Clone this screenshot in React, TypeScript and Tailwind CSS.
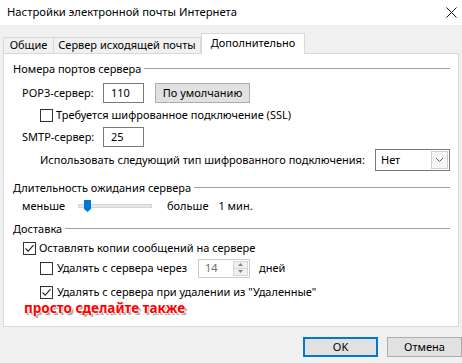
import React from 'react'

const font = "font-['Noto_Sans','Liberation_Sans',sans-serif]"

function Check({ checked }: { checked?: boolean }) {
  return (
    <span className="flex h-[13px] w-[13px] shrink-0 items-center justify-center border border-[#333] bg-white">
      {checked && (
        <svg width="11" height="11" viewBox="0 0 11 11">
          <path d="M1.5 5.5 L4.2 8.2 L9.5 2.2" fill="none" stroke="#222" strokeWidth="1.1" />
        </svg>
      )}
    </span>
  )
}

function Legend({ title }: { title: string }) {
  return (
    <div className="flex h-[14px] items-center pr-[8px]">
      <span className="leading-none">{title}</span>
      <span className="ml-[3px] h-px flex-1 bg-[#a0a0a0]" />
    </div>
  )
}

function Field({ value }: { value: string }) {
  return (
    <div className="flex h-[20px] w-[41px] items-center border border-[#7a7a7a] bg-white pl-[7px]">{value}</div>
  )
}

export default function App() {
  return (
    <div className={`${font} flex h-[363px] w-[462px] flex-col whitespace-nowrap bg-[#f0f0f0] text-[11px] text-black`}>
      <div className="flex h-[25px] items-center justify-between bg-white pl-[7px] pr-[5px]">
        <span className="text-[11.25px]">Настройки электронной почты Интернета</span>
        <svg width="11" height="11" viewBox="0 0 11 11">
          <path d="M0.5 0.5 L10.5 10.5 M10.5 0.5 L0.5 10.5" stroke="#111" strokeWidth="1" />
        </svg>
      </div>

      <div className="mt-[8px] flex h-[20px] items-end pl-[3px]">
        <div className="flex h-[16px] w-[51px] items-center justify-center border border-b-0 border-[#d9d9d9] bg-[#f0f0f0]">
          Общие
        </div>
        <div className="flex h-[16px] w-[147px] items-center justify-center border border-b-0 border-l-0 border-[#d9d9d9] bg-[#f0f0f0]">
          Сервер исходящей почты
        </div>
        <div className="relative z-10 -mb-px flex h-[21px] w-[104px] items-center justify-center border border-b-0 border-[#d9d9d9] bg-white pb-[2px]">
          Дополнительно
        </div>
      </div>

      <div className="mx-[3px] flex h-[274px] w-[456px] flex-col border border-[#d9d9d9] bg-white pl-[9px]">
        <div className="mt-[7px]">
          <Legend title="Номера портов сервера" />
        </div>

        <div className="mt-[8px] flex h-[20px] items-center pl-[9px]">
          <span className="w-[81px]">POP3-сервер:</span>
          <Field value="110" />
          <div className="ml-[11px] flex h-[20px] w-[95px] items-center justify-center border border-[#adadad] bg-[#e1e1e1]">
            По умолчанию
          </div>
        </div>

        <div className="mt-[5px] flex h-[14px] items-center gap-[3px] pl-[27px]">
          <Check />
          <span>Требуется шифрованное подключение (SSL)</span>
        </div>

        <div className="mt-[5px] flex h-[20px] items-center pl-[9px]">
          <span className="w-[81px]">SMTP-сервер:</span>
          <Field value="25" />
        </div>

        <div className="mt-[2px] flex h-[22px] items-center pl-[27px]">
          <span className="flex-1">Использовать следующий тип шифрованного подключения:</span>
          <div className="mr-[8px] flex h-[22px] w-[75px] items-center justify-between border border-[#7a7a7a] bg-white pl-[5px] pr-px">
            <span>Нет</span>
            <span className="flex h-[18px] w-[17px] items-center justify-center border border-[#cfcfcf] bg-[#f7f7f7]">
              <svg width="9" height="6" viewBox="0 0 9 6">
                <path d="M1 1 L4.5 4.5 L8 1" fill="none" stroke="#606060" strokeWidth="1" />
              </svg>
            </span>
          </div>
        </div>

        <div className="mt-[9px]">
          <Legend title="Длительность ожидания сервера" />
        </div>

        <div className="mt-[5px] flex h-[14px] items-center pl-[9px]">
          <span className="w-[56px]">меньше</span>
          <div className="relative h-[4px] w-[74px] border border-[#d6d6d6] bg-[#e7e7e7]">
            <svg className="absolute -top-[5px] left-[5px]" width="7" height="12" viewBox="0 0 7 12">
              <path d="M0 0 H7 V9 L3.5 12 L0 9 Z" fill="#0078d7" />
            </svg>
          </div>
          <span className="ml-[15px]">больше</span>
          <span className="ml-[10px]">1 мин.</span>
        </div>

        <div className="mt-[8px]">
          <Legend title="Доставка" />
        </div>

        <div className="mt-[6px] flex h-[14px] items-center gap-[3px] pl-[10px]">
          <Check checked />
          <span>Оставлять копии сообщений на сервере</span>
        </div>

        <div className="mt-[3px] flex h-[20px] items-center pl-[27px]">
          <Check />
          <span className="ml-[4px] w-[141px]">Удалять с сервера через</span>
          <div className="flex h-[19px] w-[52px] items-center justify-between border border-[#cccccc] bg-white pl-[6px] pr-px">
            <span className="text-[#6d6d6d]">14</span>
            <span className="flex h-[15px] w-[15px] flex-col border border-[#d6d6d6] bg-[#f0f0f0]">
              <span className="flex flex-1 items-center justify-center border-b border-[#d6d6d6]">
                <svg width="5" height="3" viewBox="0 0 5 3"><path d="M0 3 L2.5 0 L5 3 Z" fill="#838383" /></svg>
              </span>
              <span className="flex flex-1 items-center justify-center">
                <svg width="5" height="3" viewBox="0 0 5 3"><path d="M0 0 L2.5 3 L5 0 Z" fill="#838383" /></svg>
              </span>
            </span>
          </div>
          <span className="ml-[9px]">дней</span>
        </div>

        <div className="mt-[7px] flex h-[14px] items-center gap-[4px] pl-[27px]">
          <Check checked />
          <span>Удалять с сервера при удалении из "Удаленные"</span>
        </div>

        <div className="flex h-[18px] items-center pl-[11px]">
          <span className="text-[13.5px] font-bold text-[#ff0000] [text-shadow:-1px_-1px_0_#fff,1px_-1px_0_#fff,-1px_1px_0_#fff,1px_1px_0_#bbb,2px_2px_1px_#999]">
            просто сделайте также
          </span>
        </div>
      </div>

      <div className="mt-[10px] flex justify-end gap-[9px] pr-0">
        <div className="flex h-[20px] w-[75px] items-center justify-center border-2 border-[#0078d7] bg-[#e1e1e1]">OK</div>
        <div className="flex h-[20px] w-[75px] items-center justify-center border border-[#adadad] bg-[#e1e1e1]">Отмена</div>
      </div>
    </div>
  )
}
